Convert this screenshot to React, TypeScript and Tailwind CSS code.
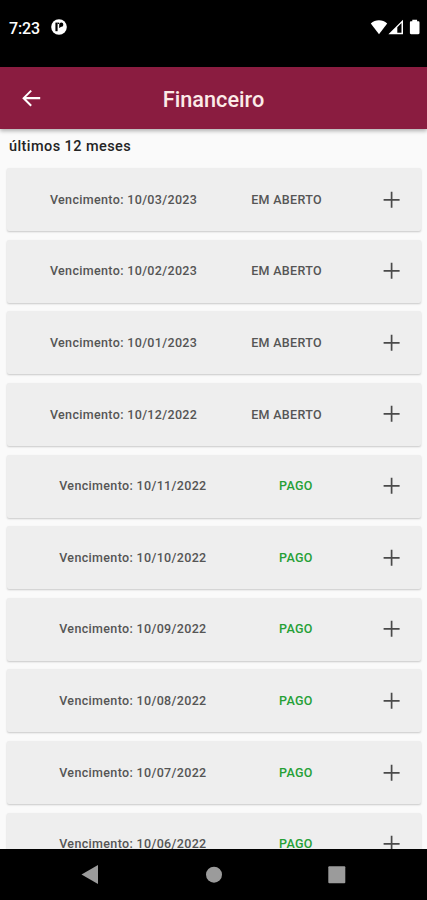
import React from "react";

const bills = [
  { due: "10/03/2023", paid: false },
  { due: "10/02/2023", paid: false },
  { due: "10/01/2023", paid: false },
  { due: "10/12/2022", paid: false },
  { due: "10/11/2022", paid: true },
  { due: "10/10/2022", paid: true },
  { due: "10/09/2022", paid: true },
  { due: "10/08/2022", paid: true },
  { due: "10/07/2022", paid: true },
  { due: "10/06/2022", paid: true },
];

function StatusBar() {
  return (
    <div className="flex h-[67px] shrink-0 items-start bg-black pl-[9px] pr-[7px] pt-[18px] text-white">
      <span className="mt-px w-[42px] text-[16px] font-medium leading-[20px] tracking-[-0.1px]">7:23</span>
      <svg className="mt-px h-[16px] w-[16px]" viewBox="0 0 16 16">
        <circle cx="8" cy="8" r="7.8" fill="#fff" />
        <path d="M4.4 3.6h2.2v8.6H4.4z" fill="#000" />
        <path d="M6.6 3.6h1.6v1.4H6.6z" fill="#000" />
        <path d="M8.2 9V5.9c0-1.4.9-2.3 2.1-2.3s2 .9 2 2.1-.8 2.1-2 2.1c-.8 0-1 1.2-2.1 1.2z" fill="#000" />
      </svg>
      <svg className="ml-auto mt-px h-[17px] w-[50px]" viewBox="0 0 50 17" fill="#fff">
        <path d="M.8 4.4C5.4.3 12.5.3 17.2 4.4L9 15.2z" />
        <path fillRule="evenodd" d="M18.4 15.2 33 .8v14.4zM27.3 8.2v5.6h4.2V4z" />
        <path d="M42.3.8h4.8v1.5h1.2c.7 0 1.2.5 1.2 1.2V14c0 .7-.5 1.2-1.2 1.2h-7.2c-.7 0-1.2-.5-1.2-1.2V3.5c0-.7.5-1.2 1.2-1.2h1.2z" />
      </svg>
    </div>
  );
}

function Header() {
  return (
    <header className="relative z-10 grid h-[62px] shrink-0 grid-cols-[64px_1fr_64px] items-center bg-[#8a1c40] text-white shadow-[0_2px_4px_rgba(0,0,0,0.3)]">
      <svg className="ml-[19px] h-6 w-6" viewBox="0 0 24 24" fill="currentColor">
        <path d="M21.2 11.1H7.1l5.8-5.8-1.4-1.4L3.2 12.2l8.3 8.3 1.4-1.4-5.8-5.8h14.1z" />
      </svg>
      <h1 className="pt-[3px] text-center text-[21.7px] font-medium leading-[28px] text-[#fcebe8]">
        Financeiro
      </h1>
    </header>
  );
}

function BillCard({ due, paid }) {
  return (
    <div className="flex h-[63px] shrink-0 items-center rounded-[2px] bg-[#eeeeee] pl-[16px] pr-[17px] shadow-[0_1px_2px_rgba(0,0,0,0.2)]">
      <div className="flex flex-1 justify-around whitespace-nowrap pt-px text-[12.5px] font-medium tracking-[0.34px] text-[#555555]">
        <span>Vencimento: {due}</span>
        {paid ? <span className="text-[#25a036]">PAGO</span> : <span>EM ABERTO</span>}
      </div>
      <svg className="ml-[31px] h-6 w-6" viewBox="0 0 24 24" stroke="#4a4a4a" strokeWidth="1.7">
        <path d="M11.6 3.8v16M3.6 11.8h16" />
      </svg>
    </div>
  );
}

function NavBar() {
  return (
    <nav className="flex h-[51px] shrink-0 items-center bg-black">
      <svg className="h-[51px] w-full" viewBox="0 0 427 51" fill="#9b9b9b">
        <path d="M81.5 25.5 98 16v19z" />
        <circle cx="214" cy="25.7" r="8" />
        <rect x="328.3" y="17.2" width="17" height="17" rx="1" />
      </svg>
    </nav>
  );
}

export default function App() {
  return (
    <div className="flex h-[900px] w-[427px] flex-col overflow-hidden bg-[#fafafa] font-['Roboto',sans-serif]">
      <StatusBar />
      <Header />
      <main className="flex min-h-0 flex-1 flex-col overflow-hidden">
        <p className="h-[39px] shrink-0 pl-[9px] pt-[8px] text-[14.5px] font-medium leading-[20px] tracking-[0.42px] text-[#242424]">
          últimos 12 meses
        </p>
        <div className="flex flex-col gap-[8.65px] pl-[7px] pr-[6px]">
          {bills.map((bill) => (
            <BillCard key={bill.due} due={bill.due} paid={bill.paid} />
          ))}
        </div>
      </main>
      <NavBar />
    </div>
  );
}
